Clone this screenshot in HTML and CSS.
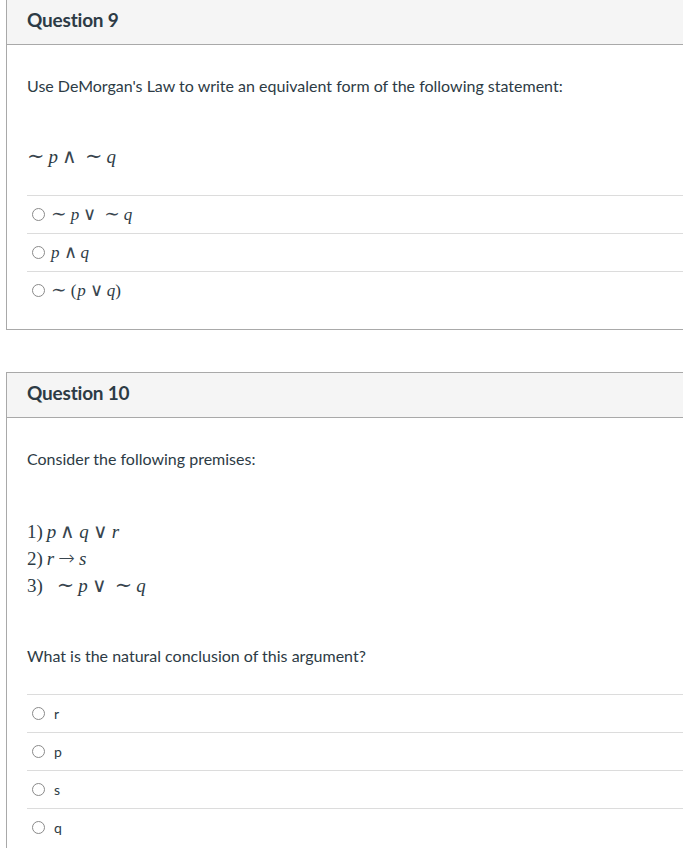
FILE: index.html
```html
<!DOCTYPE html>
<html lang="en">
<head>
<meta charset="utf-8">
<title>Quiz</title>
<link rel="stylesheet" href="styles.css">
</head>
<body>
<div class="question first">
  <div class="q-header"><h2>Question 9</h2></div>
  <div class="q-body">
    <p class="prompt">Use DeMorgan's Law to write an equivalent form of the following statement:</p>
    <p class="formula"><span class="op tl">∼</span><i>p</i><span class="op">∧</span><span class="op tl">∼</span><i>q</i></p>
    <ul class="answers">
      <li><span class="radio"></span><span class="math"><span class="op tl">∼</span><i>p</i><span class="op">∨</span><span class="op tl">∼</span><i>q</i></span></li>
      <li><span class="radio"></span><span class="math"><i>p</i><span class="op">∧</span><i>q</i></span></li>
      <li><span class="radio"></span><span class="math"><span class="op tl">∼</span><span class="par">(</span><i>p</i><span class="op">∨</span><i>q</i><span class="par">)</span></span></li>
    </ul>
  </div>
</div>
<div class="question">
  <div class="q-header"><h2>Question 10</h2></div>
  <div class="q-body">
    <p class="prompt">Consider the following premises:</p>
    <div class="premises">
      <div class="premise">1)<span class="sp"></span><i>p</i><span class="op">∧</span><i>q</i><span class="op">∨</span><i>r</i></div>
      <div class="premise">2)<span class="sp"></span><i>r</i><span class="op">→</span><i>s</i></div>
      <div class="premise">3)<span class="sp2"></span><span class="op tl">∼</span><i>p</i><span class="op">∨</span><span class="op tl">∼</span><i>q</i></div>
    </div>
    <p class="prompt second">What is the natural conclusion of this argument?</p>
    <ul class="answers">
      <li><span class="radio"></span><span class="txt">r</span></li>
      <li><span class="radio"></span><span class="txt">p</span></li>
      <li><span class="radio"></span><span class="txt">s</span></li>
      <li><span class="radio"></span><span class="txt">q</span></li>
    </ul>
  </div>
</div>
</body>
</html>
```
FILE: styles.css
```css
html, body {
  margin: 0;
  padding: 0;
  background: #ffffff;
}
body {
  font-family: Lato, "Noto Sans", sans-serif;
  color: #2d3b45;
  overflow: hidden;
}
.question {
  margin: 42px 0 0 6px;
  width: 680px;
  border: 1px solid #a9a9a9;
  background: #fff;
}
.question.first {
  margin-top: -1px;
}
.q-header {
  height: 45px;
  box-sizing: border-box;
  padding: 0 0 5px 20px;
  background: #f5f5f5;
  border-bottom: 1px solid #a9a9a9;
  display: flex;
  align-items: center;
}
.q-header h2 {
  margin: 0;
  font-size: 19px;
  font-weight: 700;
  color: #2d3b45;
  letter-spacing: -0.2px;
}
.q-body {
  padding: 29px 0 20px 20px;
}
.prompt {
  margin: 0;
  font-size: 16px;
  line-height: 24px;
}
.prompt.second {
  margin-top: 45px;
}
.formula {
  margin: 47px 0 0 0;
  font-family: "Liberation Serif", "DejaVu Serif", serif;
  font-size: 19px;
  line-height: 24px;
  height: 24px;
}
i {
  font-style: italic;
  font-family: "Liberation Serif", serif;
  font-weight: 400;
}
.op {
  font-family: "DejaVu Sans", serif;
  font-weight: 200;
  font-size: 1.05em;
  line-height: 1;
  margin: 0 4px;
  color: #3a464f;
}
.op.tl {
  font-family: "DejaVu Serif", serif;
  font-weight: 400;
  font-size: 1.1em;
}
.par {
  font-family: "Liberation Serif", serif;
  margin-right: 1px;
}
.formula .op:first-child,
.math .op:first-child {
  margin-left: 0;
}
.answers {
  list-style: none;
  margin: 26px 0 0 0;
  padding: 0;
}
.answers li {
  border-top: 1px solid #dcdcdc;
  height: 37px;
  display: flex;
  align-items: center;
}
.radio {
  width: 11px;
  height: 11px;
  border: 1.5px solid #8a8a8a;
  border-radius: 50%;
  margin-left: 5px;
  margin-right: 6px;
  flex: none;
}
.math {
  font-family: "Liberation Serif", "DejaVu Serif", serif;
  font-size: 17px;
  line-height: 20px;
}
.txt {
  font-size: 14px;
  margin-left: 3px;
}
.premises {
  margin-top: 47px;
  font-family: "Liberation Serif", "DejaVu Serif", serif;
  font-size: 19px;
}
.premise {
  height: 27px;
  line-height: 27px;
}
.sp { display: inline-block; width: 4px; }
.sp2 { display: inline-block; width: 10px; }
```
